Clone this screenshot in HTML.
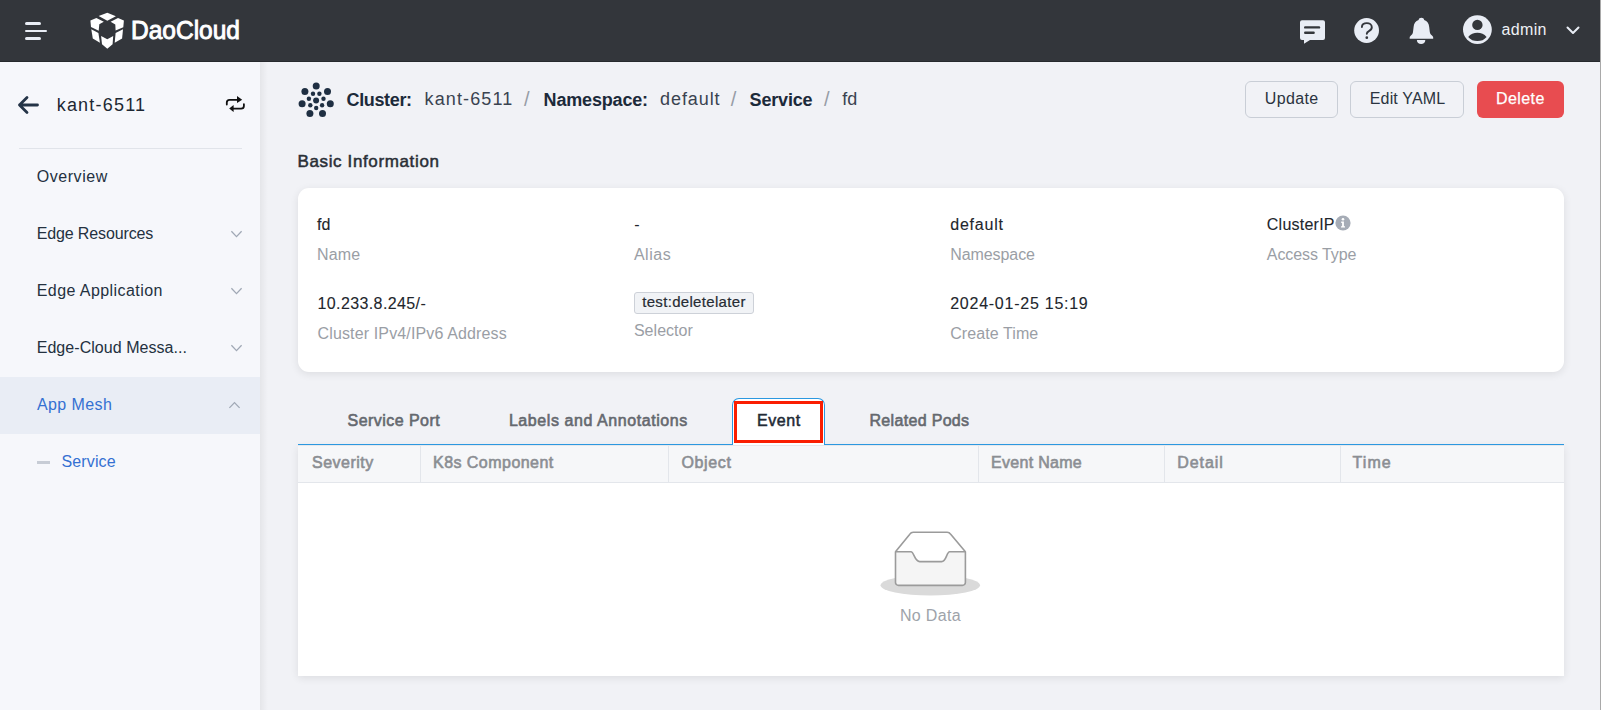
<!DOCTYPE html>
<html>
<head>
<meta charset="utf-8">
<style>
html,body{margin:0;padding:0;}
body{width:1601px;height:710px;overflow:hidden;position:relative;background:#f1f2f6;font-family:"Liberation Sans",sans-serif;}
.t{position:absolute;white-space:pre;font-family:"Liberation Sans",sans-serif;}
.abs{position:absolute;}
#header{position:absolute;left:0;top:0;width:1601px;height:62px;background:#33363b;}
#hshadow{position:absolute;left:0;top:61px;width:1601px;height:1px;background:#26292d;}
#sidebar{position:absolute;left:0;top:62px;width:260px;height:648px;background:#f6f7fb;}
#sbshadow{position:absolute;left:260px;top:62px;width:8px;height:648px;background:linear-gradient(to right,rgba(0,0,0,0.05),rgba(0,0,0,0));}
#divider{position:absolute;left:19px;top:148px;width:223px;height:1px;background:#e1e4ea;}
#active{position:absolute;left:0;top:377px;width:260px;height:57px;background:#e9edf5;}
.chev{position:absolute;}
.btn{position:absolute;box-sizing:border-box;border:1px solid #c9ced6;border-radius:6px;background:#f1f2f6;}
#card{position:absolute;left:298px;top:188px;width:1266px;height:184px;background:#fff;border-radius:11px;box-shadow:0 2px 8px rgba(0,0,0,0.09);}
#tag{position:absolute;left:634px;top:292px;width:120px;height:22px;box-sizing:border-box;border:1px solid #cdd1d8;border-radius:3px;background:#f1f3f6;}
#tabline{position:absolute;left:298px;top:444px;width:1266px;height:1px;background:#2b98e0;}
#tabactive{position:absolute;left:732px;top:398px;width:93px;height:47px;box-sizing:border-box;border:1px solid #2b98e0;border-bottom:none;border-radius:7px 7px 0 0;background:#fff;}
#redbox{position:absolute;left:734px;top:401px;width:89px;height:42px;box-sizing:border-box;border:3px solid #fa1e02;}
#table{position:absolute;left:298px;top:445px;width:1266px;height:231px;background:#fff;box-shadow:0 2px 8px rgba(0,0,0,0.09);}
#thead{position:absolute;left:298px;top:445px;width:1266px;height:37px;background:#f6f7f9;border-bottom:1px solid #e3e6eb;}
.colsep{position:absolute;top:446px;width:1px;height:36px;background:#e3e6eb;}
#rightedge{position:absolute;left:1600px;top:0;width:1px;height:710px;background:#a9a9a9;}
</style>
</head>
<body>
<div id="header"></div>
<div id="hshadow"></div>
<!-- hamburger -->
<div class="abs" style="left:25px;top:22px;width:16px;height:3px;border-radius:2px;background:#e9edf5"></div>
<div class="abs" style="left:25px;top:29.5px;width:22px;height:2.5px;border-radius:1px;background:#e9edf5"></div>
<div class="abs" style="left:25px;top:37px;width:16px;height:3px;border-radius:2px;background:#e9edf5"></div>
<!-- logo cube -->
<svg class="abs" style="left:86px;top:10px" width="42" height="42" viewBox="0 0 42 42">
<g fill="#ffffff">
<polygon points="12.7,5.9 21.3,2.7 29.9,6.2 21.3,10.7"/>
<polygon points="4.4,10.4 10.4,8.0 17.8,11.8 13.3,14.2 12.7,20.7 5.0,16.9"/>
<polygon points="32.0,8.0 37.9,10.6 37.3,17.2 29.6,20.4 29.3,14.5 24.6,11.8"/>
<polygon points="5.3,19.2 12.4,23.1 13.9,32.8 6.8,28.4"/>
<polygon points="37.0,19.2 29.6,23.1 28.7,32.8 36.1,28.4"/>
<polygon points="15.1,26.0 21.3,29.3 27.2,26.0 26.6,34.3 21.3,38.8 16.0,34.3"/>
</g>
</svg>
<!-- header right icons -->
<svg class="abs" style="left:1298px;top:18px" width="30" height="28" viewBox="0 0 30 28">
<path d="M4,2.3 H25 A2,2 0 0 1 27,4.3 V20 A2,2 0 0 1 25,22 H12 L6,25.7 V22 H4 A2,2 0 0 1 2,20 V4.3 A2,2 0 0 1 4,2.3 Z" fill="#e9edf5"/>
<rect x="6" y="8.2" width="16.2" height="2.4" rx="1.2" fill="#33363b"/>
<rect x="6" y="13.6" width="10.8" height="2.4" rx="1.2" fill="#33363b"/>
</svg>
<svg class="abs" style="left:1352px;top:16px" width="30" height="30" viewBox="0 0 30 30">
<circle cx="14.6" cy="14.5" r="12.4" fill="#e9edf5"/>
<path d="M9.9,11 C9.9,8.5 12,7.1 14.8,7.1 C17.6,7.1 19.8,8.8 19.8,11.3 C19.8,13.3 18.5,14.3 16.9,15.1 C15.4,15.9 14.8,16.5 14.8,17.8" fill="none" stroke="#33363c" stroke-width="1.9" stroke-linecap="round"/>
<circle cx="14.8" cy="21.7" r="1.35" fill="#33363b"/>
</svg>
<svg class="abs" style="left:1407px;top:16px" width="30" height="30" viewBox="0 0 30 30">
<path d="M14.4,1.8 C16,1.8 16.9,2.6 17.2,4 C20.2,5 21.9,7.5 22.2,11 L22.8,16 C23,17.5 23.7,18.5 25,19.5 C26,20.3 26.4,21.2 26.2,22.8 H2.7 C2.5,21.2 2.9,20.3 3.9,19.5 C5.2,18.5 5.8,17.5 6,16 L6.6,11 C6.9,7.5 8.6,5 11.6,4 C11.9,2.6 12.8,1.8 14.4,1.8 Z" fill="#e9edf5"/>
<path d="M9.9,23.9 H18.3 C18.3,26.5 16.5,28 14.1,28 C11.7,28 9.9,26.5 9.9,23.9 Z" fill="#e9edf5"/>
</svg>
<svg class="abs" style="left:1460px;top:13px" width="34" height="34" viewBox="0 0 34 34">
<circle cx="17.4" cy="16.6" r="14.4" fill="#e9edf5"/>
<circle cx="17.4" cy="11.9" r="5.2" fill="#33363b"/>
<path d="M8.2,23.9 C10.5,21 13.8,19.7 17.4,19.7 C21,19.7 24.3,21 26.6,23.9 C24.3,26.8 21,28.0 17.4,28.0 C13.8,28.0 10.5,26.8 8.2,23.9 Z" fill="#33363b"/>
</svg>
<svg class="abs" style="left:1565px;top:25px" width="16" height="12" viewBox="0 0 16 12">
<polyline points="2.5,2.5 8,8 13.5,2.5" fill="none" stroke="#e9edf5" stroke-width="2" stroke-linecap="round" stroke-linejoin="round"/>
</svg>

<!-- sidebar -->
<div id="sidebar"></div>
<div id="sbshadow"></div>
<div id="active"></div>
<div id="divider"></div>
<svg class="abs" style="left:16px;top:94px" width="26" height="22" viewBox="0 0 26 22">
<path d="M11,3.5 L3.5,11 L11,18.5 M3.5,11 H21.5" fill="none" stroke="#243447" stroke-width="2.8" stroke-linecap="round" stroke-linejoin="round"/>
</svg>
<svg class="abs" style="left:222px;top:92px" width="28" height="24" viewBox="0 0 28 24">
<path d="M4.8,12.6 V10.6 C4.8,8.7 5.9,7.8 7.6,7.8 H15.8" fill="none" stroke="#111" stroke-width="1.8" stroke-linecap="round"/>
<polygon points="15,4.1 20.2,7.7 15,11.1" fill="#111"/>
<path d="M21.9,12.2 V14 C21.9,15.7 20.8,16.6 19.1,16.6 H11" fill="none" stroke="#111" stroke-width="1.8" stroke-linecap="round"/>
<polygon points="11.6,13.1 7.2,16.6 11.6,20.1" fill="#111"/>
</svg>
<!-- sidebar chevrons -->
<svg class="chev" style="left:229px;top:228px" width="15" height="12" viewBox="0 0 15 12"><polyline points="2.4,3.3 7.5,8.6 12.6,3.3" fill="none" stroke="#a0a8b5" stroke-width="1.3"/></svg>
<svg class="chev" style="left:229px;top:285px" width="15" height="12" viewBox="0 0 15 12"><polyline points="2.4,3.3 7.5,8.6 12.6,3.3" fill="none" stroke="#a0a8b5" stroke-width="1.3"/></svg>
<svg class="chev" style="left:229px;top:342px" width="15" height="12" viewBox="0 0 15 12"><polyline points="2.4,3.3 7.5,8.6 12.6,3.3" fill="none" stroke="#a0a8b5" stroke-width="1.3"/></svg>
<svg class="chev" style="left:227px;top:399px" width="15" height="12" viewBox="0 0 15 12"><polyline points="2.4,8.9 7.5,3.6 12.6,8.9" fill="none" stroke="#a0a8b5" stroke-width="1.3"/></svg>
<div class="abs" style="left:37px;top:460.5px;width:13px;height:3px;background:#c7ccd5"></div>

<!-- breadcrumb icon -->
<svg class="abs" style="left:296px;top:80px" width="42" height="42" viewBox="0 0 42 42">
<g fill="#1f2d3d" id="dots"></g>
<circle cx="20.1" cy="20.4" r="3.0" fill="#1f2f42"/>
<circle cx="20.2" cy="6.0" r="3.5" fill="#1f2f42"/>
<circle cx="31.5" cy="11.5" r="3.5" fill="#1f2f42"/>
<circle cx="34.3" cy="23.7" r="3.5" fill="#1f2f42"/>
<circle cx="26.5" cy="33.5" r="3.5" fill="#1f2f42"/>
<circle cx="13.9" cy="33.5" r="3.5" fill="#1f2f42"/>
<circle cx="6.1" cy="23.7" r="3.5" fill="#1f2f42"/>
<circle cx="8.9" cy="11.5" r="3.5" fill="#1f2f42"/>
<circle cx="20.2" cy="28.0" r="2.2" fill="#1f2f42"/>
<circle cx="26.1" cy="25.2" r="2.2" fill="#1f2f42"/>
<circle cx="27.5" cy="18.8" r="2.2" fill="#1f2f42"/>
<circle cx="23.4" cy="13.7" r="2.2" fill="#1f2f42"/>
<circle cx="17.0" cy="13.7" r="2.2" fill="#1f2f42"/>
<circle cx="12.9" cy="18.8" r="2.2" fill="#1f2f42"/>
<circle cx="14.3" cy="25.2" r="2.2" fill="#1f2f42"/>
</svg>

<!-- buttons -->
<div class="btn" style="left:1245px;top:81px;width:93px;height:37px"></div>
<div class="btn" style="left:1350px;top:81px;width:114px;height:37px"></div>
<div class="abs" style="left:1477px;top:81px;width:87px;height:37px;border-radius:6px;background:#e84c50"></div>

<!-- card -->
<div id="card"></div>
<div id="tag"></div>
<svg class="abs" style="left:1335px;top:215px" width="16" height="16" viewBox="0 0 16 16">
<circle cx="8" cy="8" r="7.6" fill="#a6acb6"/>
<circle cx="8" cy="4.2" r="1.3" fill="#fff"/>
<path d="M6.2,6.6 H8.9 V11.3 H10 V12.6 H6 V11.3 H7.1 V7.9 H6.2 Z" fill="#fff"/>
</svg>

<!-- table -->
<div id="table"></div>
<div id="thead"></div>
<div class="colsep" style="left:420px"></div>
<div class="colsep" style="left:668px"></div>
<div class="colsep" style="left:978px"></div>
<div class="colsep" style="left:1164px"></div>
<div class="colsep" style="left:1340px"></div>
<div class="abs" style="left:298px;top:445px;width:1266px;height:1px;background:#e6e8ec"></div>
<div id="tabline"></div>
<div id="tabactive"></div>
<div id="redbox"></div>

<!-- empty icon -->
<svg class="abs" style="left:870px;top:525px" width="120" height="80" viewBox="0 0 120 80">
<ellipse cx="60.3" cy="60.3" rx="49.7" ry="10.3" fill="#dadada"/>
<path d="M25.5,26.8 L39.6,9.4 C40.4,8.3 41.4,7.3 43.2,7.3 H77.2 C79,7.3 80,8.3 80.9,9.4 L95.4,26.8" fill="#ffffff" stroke="#9b9b9b" stroke-width="1.6" stroke-linejoin="round"/>
<path d="M25.5,26.8 H41 C44,26.8 44.5,36.6 49.7,36.6 H71.6 C76.4,36.6 76.6,26.8 79.6,26.8 H95.4 V57.4 A3,3 0 0 1 92.4,60.4 H28.5 A3,3 0 0 1 25.5,57.4 Z" fill="#f5f5f5" stroke="#9b9b9b" stroke-width="1.6" stroke-linejoin="round"/>
</svg>

<div id="rightedge"></div>
<div class="t" style="left:131.3px;top:18.0px;font-size:25px;line-height:25px;font-weight:400;color:#ffffff;letter-spacing:0.00px;transform:scaleX(0.9800);transform-origin:1.50px 0;-webkit-text-stroke:0.9px currentColor;">DaoCloud</div>
<div class="t" style="left:1501.4px;top:22.0px;font-size:16px;line-height:16px;font-weight:400;color:#eef0f5;letter-spacing:0.38px;">admin</div>
<div class="t" style="left:56.7px;top:96.0px;font-size:18px;line-height:18px;font-weight:400;color:#1d2733;letter-spacing:1.21px;">kant-6511</div>
<div class="t" style="left:36.7px;top:169.0px;font-size:16px;line-height:16px;font-weight:400;color:#24313f;letter-spacing:0.56px;">Overview</div>
<div class="t" style="left:36.7px;top:226.0px;font-size:16px;line-height:16px;font-weight:400;color:#24313f;letter-spacing:-0.13px;">Edge Resources</div>
<div class="t" style="left:36.7px;top:283.0px;font-size:16px;line-height:16px;font-weight:400;color:#24313f;letter-spacing:0.44px;">Edge Application</div>
<div class="t" style="left:36.7px;top:340.0px;font-size:16px;line-height:16px;font-weight:400;color:#24313f;letter-spacing:0.05px;">Edge-Cloud Messa...</div>
<div class="t" style="left:36.9px;top:397.0px;font-size:16px;line-height:16px;font-weight:400;color:#3470d2;letter-spacing:0.42px;">App Mesh</div>
<div class="t" style="left:61.4px;top:454.0px;font-size:16px;line-height:16px;font-weight:400;color:#3470d2;letter-spacing:0.15px;">Service</div>
<div class="t" style="left:346.6px;top:91.0px;font-size:18px;line-height:18px;font-weight:700;color:#1c2a3a;letter-spacing:-0.37px;">Cluster:</div>
<div class="t" style="left:424.6px;top:90.0px;font-size:18px;line-height:18px;font-weight:400;color:#3a4350;letter-spacing:1.11px;">kant-6511</div>
<div class="t" style="left:523.9px;top:89.0px;font-size:20px;line-height:20px;font-weight:400;color:#979da6;letter-spacing:0.00px;">/</div>
<div class="t" style="left:543.6px;top:91.0px;font-size:18px;line-height:18px;font-weight:700;color:#1c2a3a;letter-spacing:-0.18px;">Namespace:</div>
<div class="t" style="left:660.1px;top:90.0px;font-size:18px;line-height:18px;font-weight:400;color:#3a4350;letter-spacing:0.90px;">default</div>
<div class="t" style="left:730.8px;top:89.0px;font-size:20px;line-height:20px;font-weight:400;color:#979da6;letter-spacing:0.00px;">/</div>
<div class="t" style="left:749.6px;top:91.0px;font-size:18px;line-height:18px;font-weight:700;color:#1c2a3a;letter-spacing:-0.17px;">Service</div>
<div class="t" style="left:824.1px;top:89.0px;font-size:20px;line-height:20px;font-weight:400;color:#979da6;letter-spacing:0.00px;">/</div>
<div class="t" style="left:842.2px;top:90.0px;font-size:18px;line-height:18px;font-weight:400;color:#3a4350;letter-spacing:0.00px;">fd</div>
<div class="t" style="left:1264.8px;top:91.0px;font-size:16px;line-height:16px;font-weight:400;color:#2b3440;letter-spacing:0.34px;">Update</div>
<div class="t" style="left:1369.8px;top:91.0px;font-size:16px;line-height:16px;font-weight:400;color:#2b3440;letter-spacing:0.15px;">Edit YAML</div>
<div class="t" style="left:1495.9px;top:91.0px;font-size:16px;line-height:16px;font-weight:400;color:#ffffff;letter-spacing:0.45px;-webkit-text-stroke:0.25px currentColor;">Delete</div>
<div class="t" style="left:297.5px;top:153.0px;font-size:17px;line-height:17px;font-weight:400;color:#2a2f36;letter-spacing:0.63px;-webkit-text-stroke:0.5px currentColor;">Basic Information</div>
<div class="t" style="left:317.1px;top:217.0px;font-size:16px;line-height:16px;font-weight:400;color:#22262c;letter-spacing:0.00px;-webkit-text-stroke:0.1px currentColor;">fd</div>
<div class="t" style="left:317.1px;top:247.0px;font-size:16px;line-height:16px;font-weight:400;color:#9a9ea5;letter-spacing:0.10px;">Name</div>
<div class="t" style="left:317.5px;top:296.0px;font-size:16px;line-height:16px;font-weight:400;color:#22262c;letter-spacing:0.39px;-webkit-text-stroke:0.1px currentColor;">10.233.8.245/-</div>
<div class="t" style="left:317.5px;top:326.0px;font-size:16px;line-height:16px;font-weight:400;color:#9a9ea5;letter-spacing:0.14px;">Cluster IPv4/IPv6 Address</div>
<div class="t" style="left:634.3px;top:217.0px;font-size:16px;line-height:16px;font-weight:400;color:#22262c;letter-spacing:0.00px;">-</div>
<div class="t" style="left:633.9px;top:247.0px;font-size:16px;line-height:16px;font-weight:400;color:#9a9ea5;letter-spacing:0.52px;">Alias</div>
<div class="t" style="left:642.2px;top:294.0px;font-size:15px;line-height:15px;font-weight:400;color:#262c33;letter-spacing:0.32px;-webkit-text-stroke:0.2px currentColor;">test:deletelater</div>
<div class="t" style="left:633.9px;top:323.0px;font-size:16px;line-height:16px;font-weight:400;color:#9a9ea5;letter-spacing:0.04px;">Selector</div>
<div class="t" style="left:950.2px;top:217.0px;font-size:16px;line-height:16px;font-weight:400;color:#22262c;letter-spacing:0.79px;-webkit-text-stroke:0.1px currentColor;">default</div>
<div class="t" style="left:950.2px;top:247.0px;font-size:16px;line-height:16px;font-weight:400;color:#9a9ea5;letter-spacing:-0.07px;">Namespace</div>
<div class="t" style="left:950.2px;top:296.0px;font-size:16px;line-height:16px;font-weight:400;color:#22262c;letter-spacing:0.75px;-webkit-text-stroke:0.1px currentColor;">2024-01-25 15:19</div>
<div class="t" style="left:950.2px;top:326.0px;font-size:16px;line-height:16px;font-weight:400;color:#9a9ea5;letter-spacing:0.09px;">Create Time</div>
<div class="t" style="left:1266.8px;top:217.0px;font-size:16px;line-height:16px;font-weight:400;color:#22262c;letter-spacing:0.24px;-webkit-text-stroke:0.1px currentColor;">ClusterIP</div>
<div class="t" style="left:1266.8px;top:247.0px;font-size:16px;line-height:16px;font-weight:400;color:#9a9ea5;letter-spacing:-0.07px;">Access Type</div>
<div class="t" style="left:347.6px;top:413.0px;font-size:16px;line-height:16px;font-weight:400;color:#65696f;letter-spacing:0.45px;-webkit-text-stroke:0.6px currentColor;">Service Port</div>
<div class="t" style="left:508.9px;top:413.0px;font-size:16px;line-height:16px;font-weight:400;color:#65696f;letter-spacing:0.57px;-webkit-text-stroke:0.6px currentColor;">Labels and Annotations</div>
<div class="t" style="left:757.0px;top:413.0px;font-size:16px;line-height:16px;font-weight:400;color:#222a35;letter-spacing:0.59px;-webkit-text-stroke:0.5px currentColor;">Event</div>
<div class="t" style="left:869.5px;top:413.0px;font-size:16px;line-height:16px;font-weight:400;color:#65696f;letter-spacing:0.32px;-webkit-text-stroke:0.6px currentColor;">Related Pods</div>
<div class="t" style="left:312.0px;top:455.0px;font-size:16px;line-height:16px;font-weight:400;color:#8b8e93;letter-spacing:0.50px;-webkit-text-stroke:0.6px currentColor;">Severity</div>
<div class="t" style="left:433.0px;top:455.0px;font-size:16px;line-height:16px;font-weight:400;color:#8b8e93;letter-spacing:0.46px;-webkit-text-stroke:0.6px currentColor;">K8s Component</div>
<div class="t" style="left:681.4px;top:455.0px;font-size:16px;line-height:16px;font-weight:400;color:#8b8e93;letter-spacing:0.65px;-webkit-text-stroke:0.6px currentColor;">Object</div>
<div class="t" style="left:991.0px;top:455.0px;font-size:16px;line-height:16px;font-weight:400;color:#8b8e93;letter-spacing:0.30px;-webkit-text-stroke:0.6px currentColor;">Event Name</div>
<div class="t" style="left:1177.2px;top:455.0px;font-size:16px;line-height:16px;font-weight:400;color:#8b8e93;letter-spacing:0.93px;-webkit-text-stroke:0.6px currentColor;">Detail</div>
<div class="t" style="left:1352.6px;top:455.0px;font-size:16px;line-height:16px;font-weight:400;color:#8b8e93;letter-spacing:1.04px;-webkit-text-stroke:0.6px currentColor;">Time</div>
<div class="t" style="left:900.0px;top:608.0px;font-size:16px;line-height:16px;font-weight:400;color:#9ea3aa;letter-spacing:0.31px;">No Data</div>
</body>
</html>
